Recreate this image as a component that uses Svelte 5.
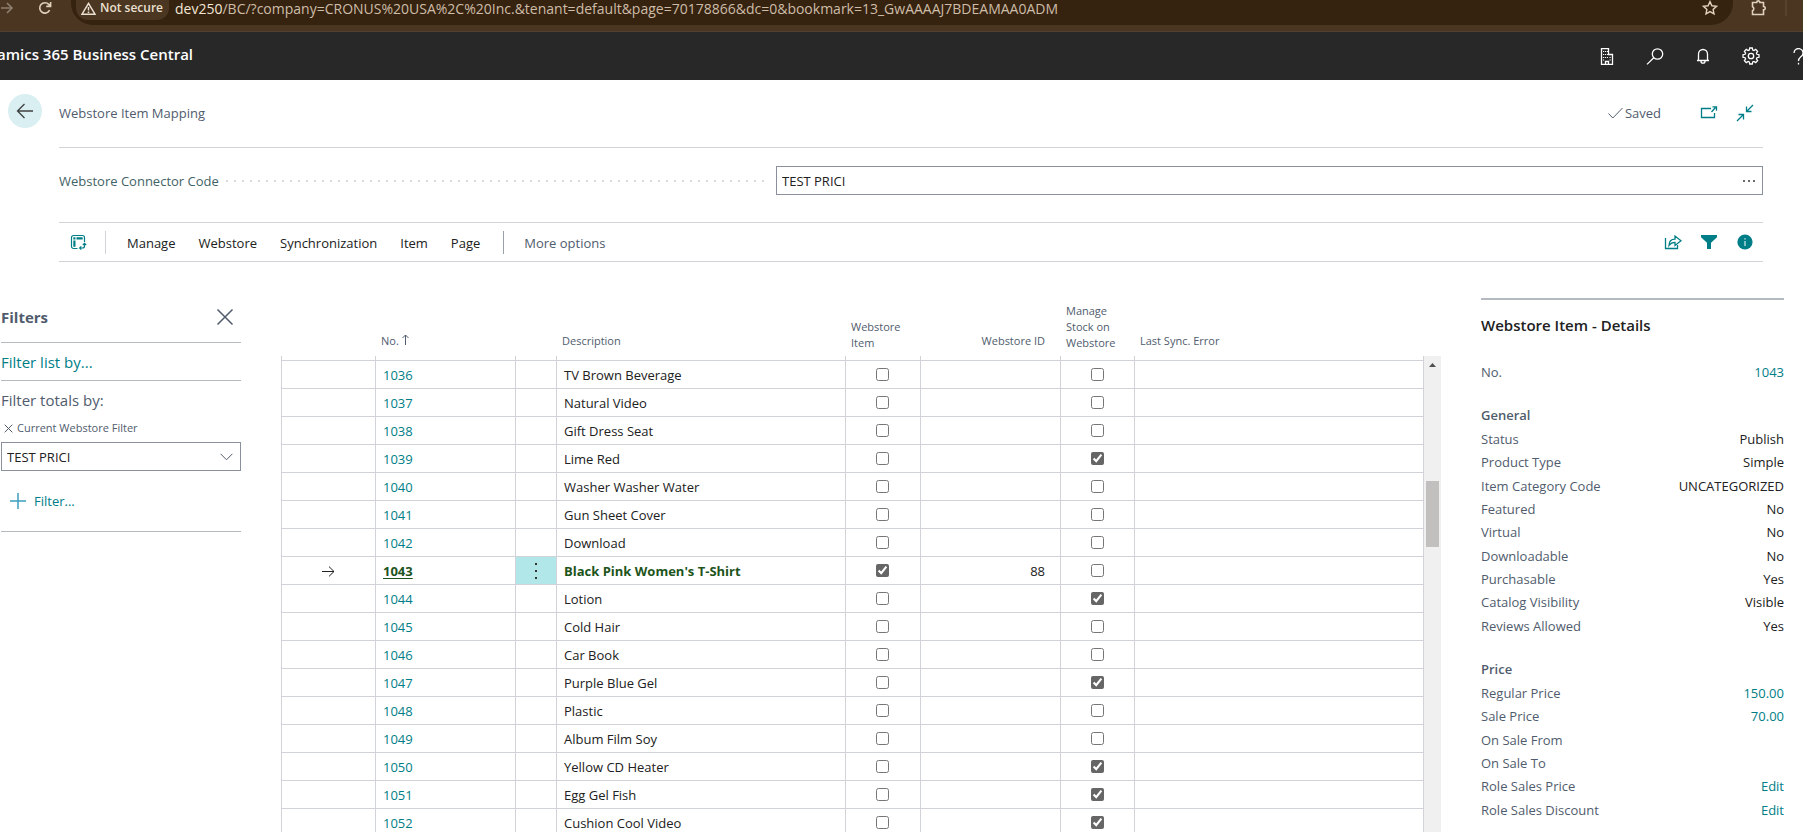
<script>
  const actions = ['Manage', 'Webstore', 'Synchronization', 'Item', 'Page'];

  let rows = $state([
    { no: '1036', description: 'TV Brown Beverage', item: false, id: '', stock: false },
    { no: '1037', description: 'Natural Video', item: false, id: '', stock: false },
    { no: '1038', description: 'Gift Dress Seat', item: false, id: '', stock: false },
    { no: '1039', description: 'Lime Red', item: false, id: '', stock: true },
    { no: '1040', description: 'Washer Washer Water', item: false, id: '', stock: false },
    { no: '1041', description: 'Gun Sheet Cover', item: false, id: '', stock: false },
    { no: '1042', description: 'Download', item: false, id: '', stock: false },
    { no: '1043', description: "Black Pink Women's T-Shirt", item: true, id: '88', stock: false },
    { no: '1044', description: 'Lotion', item: false, id: '', stock: true },
    { no: '1045', description: 'Cold Hair', item: false, id: '', stock: false },
    { no: '1046', description: 'Car Book', item: false, id: '', stock: false },
    { no: '1047', description: 'Purple Blue Gel', item: false, id: '', stock: true },
    { no: '1048', description: 'Plastic', item: false, id: '', stock: false },
    { no: '1049', description: 'Album Film Soy', item: false, id: '', stock: false },
    { no: '1050', description: 'Yellow CD Heater', item: false, id: '', stock: true },
    { no: '1051', description: 'Egg Gel Fish', item: false, id: '', stock: true },
    { no: '1052', description: 'Cushion Cool Video', item: false, id: '', stock: true }
  ]);

  let current = $state('1043');
  let connector = $state('TEST PRICI');
  let filterValue = $state('TEST PRICI');

  const groups = [
    {
      title: 'General',
      fields: [
        ['Status', 'Publish'],
        ['Product Type', 'Simple'],
        ['Item Category Code', 'UNCATEGORIZED'],
        ['Featured', 'No'],
        ['Virtual', 'No'],
        ['Downloadable', 'No'],
        ['Purchasable', 'Yes'],
        ['Catalog Visibility', 'Visible'],
        ['Reviews Allowed', 'Yes']
      ]
    },
    {
      title: 'Price',
      fields: [
        ['Regular Price', '150.00', true],
        ['Sale Price', '70.00', true],
        ['On Sale From', ''],
        ['On Sale To', ''],
        ['Role Sales Price', 'Edit', true],
        ['Role Sales Discount', 'Edit', true]
      ]
    }
  ];
</script>

<div class="app">
  <div class="browser">
    <button class="plain nav-forward" aria-label="Forward">
      <svg width="14" height="14" viewBox="0 0 14 14"><path d="M1 7h11M7 2l5 5-5 5" /></svg>
    </button>
    <button class="plain reload" aria-label="Reload">
      <svg width="14" height="14" viewBox="0 0 14 14"><path d="M11.6 9.2A5.2 5.2 0 1 1 10.8 3.4L12.6 5.2M12.6 1v4.4H8.2" /></svg>
    </button>
    <div class="omnibox">
      <button class="plain secure">
        <svg width="15" height="13" viewBox="0 0 15 13"><path d="M7.5 1.4 14 12.2H1zM7.5 5v3.6M7.5 9.6v1.4" /></svg>
        <span>Not secure</span>
      </button>
      <span class="url"><b>dev250</b>/BC/?company=CRONUS%20USA%2C%20Inc.&amp;tenant=default&amp;page=70178866&amp;dc=0&amp;bookmark=13_GwAAAAJ7BDEAMAA0ADM</span>
      <button class="plain star" aria-label="Bookmark this page">
        <svg width="16" height="16" viewBox="0 0 16 16"><path d="M8 1.6l1.9 4.2 4.6.5-3.4 3.1.9 4.5L8 11.6l-4 2.3.9-4.5L1.500 6.300l4.600-.5z" /></svg>
      </button>
    </div>
    <button class="plain extensions" aria-label="Extensions">
      <svg width="16" height="17" viewBox="0 0 16 17"><path d="M1.500 2.500h4.200a1.600 1.600 0 0 1 3.200 0H12.500v4a1.600 1.600 0 0 1 0 3.400V14.500h-11V10.700a2.200 2.200 0 0 0 0-4z" /></svg>
    </button>
    <span class="browser-sep"></span>
  </div>

  <header class="suite">
    <span class="product">amics 365 Business Central</span>
    <div class="suite-actions">
      <button class="plain" aria-label="Companies">
        <svg width="14" height="17" viewBox="0 0 14 17"><path d="M1.500 16.500v-16h7v6h4v10zM5.500 16v-2.500h3V16" /><path class="dots" d="M3 3.500h1.200M5 3.500h1.200M7 3.500h1M3 6.500h1.200M5 6.500h1.200M7 6.500h1M3 9.500h1.200M5 9.500h1.200M7 9.500h1M9.500 9.500h1.200M3 12h1.200M9.500 12h1.200" /></svg>
      </button>
      <button class="plain" aria-label="Search">
        <svg width="18" height="17" viewBox="0 0 18 17"><circle cx="11.500" cy="6" r="5.200" /><path d="M7.800 9.700 1 16.400" /></svg>
      </button>
      <button class="plain" aria-label="Notifications">
        <svg width="14" height="17" viewBox="0 0 14 17"><path d="M1 12.500h12M2.500 12.500V6a4.500 4.500 0 0 1 9 0v6.500M5 13.200a2 2 0 0 0 4 0" /></svg>
      </button>
      <button class="plain" aria-label="Settings">
        <svg width="18" height="18" viewBox="0 0 18 18"><circle cx="9" cy="9" r="2.700" /><path d="M7.700 1h2.600l.4 2.100 1.200.5L13.700 2.400l1.900 1.900-1.200 1.800.5 1.200 2.100.4v2.600l-2.100.4-.5 1.200 1.200 1.800-1.900 1.900-1.800-1.200-1.200.5-.4 2.100H7.700l-.4-2.100-1.200-.5-1.800 1.200-1.900-1.900 1.200-1.800-.5-1.200L1 10.300V7.700l2.100-.4.500-1.200-1.200-1.800 1.900-1.900 1.800 1.200 1.200-.5z" /></svg>
      </button>
      <button class="plain" aria-label="Help">
        <svg width="12" height="17" viewBox="0 0 12 17"><path d="M1 5a4.500 4.300 0 1 1 7.400 3.200C6.600 9.800 5.500 10.400 5.500 13M5.500 14.800v1.600" /></svg>
      </button>
    </div>
  </header>

  <main>
    <section class="top">
      <div class="title-row">
        <button class="back" aria-label="Back">
          <svg width="18" height="16" viewBox="0 0 18 16"><path d="M17 8H1.500M8.500 1l-7 7 7 7" /></svg>
        </button>
        <h1>Webstore Item Mapping</h1>
        <span class="saved">
          <svg width="15" height="12" viewBox="0 0 15 12"><path d="M.5 6.500 4.800 11 14.500 1" /></svg>
          Saved
        </span>
        <div class="title-icons">
          <button class="plain" aria-label="Open in new window">
            <svg width="18" height="18" viewBox="0 0 18 18"><path d="M11 4.500H1.500v9h13V9M11.500 8l4-4.500M12.500 2.800h4v4" /></svg>
          </button>
          <button class="plain" aria-label="Collapse">
            <svg width="18" height="18" viewBox="0 0 18 18"><path d="M17 1l-6.500 6.500M10.500 2.500v5h5M1 17l6.500-6.500M2.500 10.500h5v5" /></svg>
          </button>
        </div>
      </div>

      <div class="field-row">
        <div class="field-label"><label for="connector">Webstore Connector Code</label><span class="leader"></span></div>
        <div class="lookup">
          <input id="connector" type="text" bind:value={connector} />
          <button class="plain" aria-label="Look up"><span></span><span></span><span></span></button>
        </div>
      </div>

      <nav class="actions">
        <button class="plain analyze" aria-label="Analyze">
          <svg width="17" height="17" viewBox="0 0 17 17"><path d="M7.500 14.500H3.500A2 2 0 0 1 1.500 12.500V3.500A2 2 0 0 1 3.500 1.500h9A2 2 0 0 1 14.500 3.500V8M14.500 9.500v2.500q0 2-2 2H10M12.800 11l1.700-1.700 1.700 1.700M11.300 12.300 9.600 14l1.700 1.700" /><path class="solid" d="M3.300 3.300h2.200v2.200H3.300zM6.500 3.300h6.200v2.200H6.500zM3.300 6.500h2.200v6.200H3.300z" /></svg>
        </button>
        <span class="sep light"></span>
        {#each actions as action}
          <button class="plain action">{action}</button>
        {/each}
        <span class="sep"></span>
        <button class="plain action more">More options</button>
        <div class="list-icons">
          <button class="plain" aria-label="Share">
            <svg width="18" height="18" viewBox="0 0 18 18"><path d="M1.500 5v10.500h12V12M5 12.500c0-4 2.500-6.300 6-6.300V3L17 7.800l-6 4.600V9.300c-2.800 0-4.500.9-6 3.200z" /></svg>
          </button>
          <button class="plain" aria-label="Toggle filter pane">
            <svg width="18" height="18" viewBox="0 0 18 18"><path class="solid" d="M1 2h16v2.200L11 9.800V16H7V9.800L1 4.200z" /></svg>
          </button>
          <button class="plain" aria-label="Toggle details pane">
            <svg width="18" height="18" viewBox="0 0 18 18"><circle class="solid" cx="9" cy="9" r="7.600" /><path class="white" d="M9 5.200v1.400M9 8v5" /></svg>
          </button>
        </div>
      </nav>
    </section>

    <section class="body">
      <aside class="filters">
        <div class="filters-head">
          <h2>Filters</h2>
          <button class="plain" aria-label="Close filters">
            <svg width="18" height="18" viewBox="0 0 18 18"><path d="M1.500 1.500l15 15M16.500 1.500l-15 15" /></svg>
          </button>
        </div>
        <a class="list-by" href="#filter-list">Filter list by...</a>
        <p class="totals">Filter totals by:</p>
        <div class="filter-name">
          <button class="plain" aria-label="Remove filter">
            <svg width="9" height="9" viewBox="0 0 9 9"><path d="M.7.7l7.600 7.600M8.300.7L.7 8.300" /></svg>
          </button>
          <label for="webstore-filter">Current Webstore Filter</label>
        </div>
        <div class="combo">
          <input id="webstore-filter" type="text" bind:value={filterValue} />
          <button class="plain" aria-label="Open list">
            <svg width="13" height="8" viewBox="0 0 13 8"><path d="M.6 .8l5.900 6 5.900-6" /></svg>
          </button>
        </div>
        <button class="plain add-filter">
          <svg width="16" height="16" viewBox="0 0 16 16"><path d="M8 0v16M0 8h16" /></svg>
          Filter...
        </button>
      </aside>

      <div class="list">
        <table>
          <colgroup>
            <col class="c-mark" /><col class="c-no" /><col class="c-menu" /><col class="c-desc" />
            <col class="c-item" /><col class="c-id" /><col class="c-stock" /><col />
          </colgroup>
          <thead>
            <tr>
              <td></td>
              <th scope="col">No. <svg width="7" height="11" viewBox="0 0 7 11"><path d="M3.500 11V1M.5 4l3-3 3 3" /></svg></th>
              <td></td>
              <th scope="col">Description</th>
              <th scope="col" class="wrapped">Webstore<br />Item</th>
              <th scope="col" class="num">Webstore ID</th>
              <th scope="col" class="wrapped">Manage<br />Stock on<br />Webstore</th>
              <th scope="col">Last Sync. Error</th>
            </tr>
          </thead>
          <tbody>
            <tr class="partial" aria-hidden="true">
              <td></td><td></td><td></td><td></td><td></td><td></td><td></td><td></td>
            </tr>
            {#each rows as row}
              <tr class:current={row.no === current} onclick={() => (current = row.no)}>
                <td class="mark">
                  {#if row.no === current}
                    <svg width="13" height="11" viewBox="0 0 13 11"><path d="M0 5.500h12M7 .6l5 4.900-5 4.900" /></svg>
                  {/if}
                </td>
                <td><a href={'#' + row.no}>{row.no}</a></td>
                <td class="menu">
                  {#if row.no === current}
                    <button class="plain" aria-label="Show more options"><span></span><span></span><span></span></button>
                  {/if}
                </td>
                <td class="desc">{row.description}</td>
                <td class="check"><input type="checkbox" aria-label={'Webstore Item ' + row.no} bind:checked={row.item} /></td>
                <td class="num">{row.id}</td>
                <td class="check"><input type="checkbox" aria-label={'Manage Stock on Webstore ' + row.no} bind:checked={row.stock} /></td>
                <td></td>
              </tr>
            {/each}
          </tbody>
        </table>
        <div class="scrollbar">
          <svg width="7" height="4" viewBox="0 0 7 4"><path d="M3.500 0L7 4H0z" /></svg>
          <div class="thumb"></div>
        </div>
      </div>

      <aside class="details">
        <h2>Webstore Item - Details</h2>
        <dl class="key">
          <div><dt>No.</dt><dd><a href="#1043">1043</a></dd></div>
        </dl>
        {#each groups as group}
          <section class="group">
            <h3>{group.title}</h3>
            <dl>
              {#each group.fields as [label, value, link]}
                <div>
                  <dt>{label}</dt>
                  <dd>{#if link}<a href="#details">{value}</a>{:else}{value}{/if}</dd>
                </div>
              {/each}
            </dl>
          </section>
        {/each}
      </aside>
    </section>
  </main>
</div>

<style>
  :global(body) {
    margin: 0;
    overflow: hidden;
  }

  .app {
    --teal: #007e87;
    --slate: #505c6d;
    --ink: #212121;
    --rule: #d0d3d8;
    display: flex;
    flex-direction: column;
    height: 100vh;
    overflow: hidden;
    background: #fff;
    color: var(--ink);
    font-family: 'Open Sans', 'Noto Sans', sans-serif;
    font-size: 13px;
    line-height: 20px;
  }

  h1, h2, h3, p, dl, dd { margin: 0; }

  a { color: var(--teal); text-decoration: none; }

  svg {
    display: block;
    flex: none;
    fill: none;
    stroke: currentColor;
  }

  .solid { fill: currentColor; stroke: none; }

  .plain {
    display: flex;
    align-items: center;
    padding: 0;
    border: 0;
    background: none;
    color: inherit;
    font: inherit;
    cursor: pointer;
  }

  input { font: inherit; color: inherit; }

  /* Browser toolbar */
  .browser {
    display: flex;
    flex: none;
    align-items: flex-start;
    height: 31px;
    border-bottom: 1px solid #524030;
    background: #4a3621;
    color: #e0d0bc;
  }
  .browser svg { stroke-width: 1.6; }
  .nav-forward { height: 16px; color: #8e7f6e; }
  .reload { height: 16px; margin-left: 24px; }
  .omnibox {
    display: flex;
    flex: 1;
    align-items: flex-start;
    height: 25px;
    margin-left: 19px;
    padding: 0 15px 0 5px;
    border-radius: 0 0 22px 22px;
    background: #35220f;
  }
  .secure {
    gap: 4px;
    height: 20px;
    padding: 0 6px 4px 5px;
    border-radius: 0 0 12px 12px;
    background: #4a3621;
    color: #ece0d2;
    font-size: 12px;
    font-weight: 600;
  }
  .secure svg { stroke-width: 1.5; }
  .url {
    flex: 1;
    margin-left: 6px;
    color: #cdbda8;
    font-size: 14px;
    line-height: 17px;
    white-space: nowrap;
  }
  .url b { color: #f3e6d6; font-weight: 400; }
  .star { height: 16px; }
  .star svg { stroke-width: 1.4; }
  .extensions { height: 16px; margin-left: 18px; }
  .browser-sep {
    width: 2px;
    height: 16px;
    margin: 0 16px 0 18px;
    background: #57442f;
  }

  /* Suite bar */
  .suite {
    display: flex;
    flex: none;
    align-items: center;
    justify-content: space-between;
    height: 48px;
    background: #282828;
    color: #fff;
  }
  .product {
    margin-left: -3px;
    padding-bottom: 4px;
    font-size: 15px;
    font-weight: 600;
  }
  .suite-actions { display: flex; margin-right: -20px; }
  .suite-actions .plain { justify-content: center; width: 48px; height: 48px; }
  .suite-actions svg { stroke-width: 1.3; }
  .suite-actions .dots { stroke-width: 1; }

  main {
    display: flex;
    flex: 1;
    flex-direction: column;
    min-height: 0;
  }

  /* Page heading, connector field and action bar */
  .top { padding: 0 40px 0 59px; }
  .title-row {
    display: flex;
    align-items: center;
    box-sizing: border-box;
    height: 68px;
    padding-bottom: 1px;
    border-bottom: 1px solid var(--rule);
    color: var(--slate);
  }
  .back {
    display: flex;
    align-items: center;
    justify-content: center;
    width: 34px;
    height: 34px;
    margin: 0 17px 4px -51px;
    padding: 0;
    border: 0;
    border-radius: 50%;
    background: #d9eff2;
    color: #404040;
  }
  .back svg { stroke-width: 1.3; }
  h1 { flex: 1; font-size: 13px; font-weight: 400; }
  .saved { display: flex; align-items: center; gap: 2px; }
  .title-icons, .list-icons {
    display: flex;
    gap: 18px;
    margin-right: 9px;
    color: var(--teal);
  }
  .title-icons { margin-left: 39px; }
  .title-icons svg, .list-icons svg { stroke-width: 1.3; }

  .field-row {
    display: grid;
    grid-template-columns: minmax(0, 5fr) minmax(0, 7fr);
    gap: 12px;
    align-items: center;
    box-sizing: border-box;
    height: 74px;
    padding-bottom: 9px;
  }
  .field-label {
    display: flex;
    align-items: center;
    gap: 4px;
    padding-top: 1px;
    color: #3f6366;
  }
  .leader {
    flex: 1;
    height: 2px;
    background: repeating-linear-gradient(to left, #d8dadd 0 2px, transparent 2px 8px);
  }
  .lookup, .combo {
    display: flex;
    box-sizing: border-box;
    height: 29px;
    border: 1px solid #8a919c;
  }
  .lookup input, .combo input {
    flex: 1;
    min-width: 0;
    padding: 1px 5px 0;
    border: 0;
    outline: 0;
    background: none;
  }
  .lookup .plain { gap: 3px; padding: 0 7px; }
  .lookup .plain span, .menu span {
    width: 2px;
    height: 2px;
    background: #333;
  }
  .lookup .plain span { background: #6b6b6b; }

  .actions {
    display: flex;
    align-items: center;
    height: 38px;
    border-top: 1px solid var(--rule);
    border-bottom: 1px solid var(--rule);
  }
  .analyze { margin: 0 18px 0 11px; color: var(--teal); }
  .analyze svg { stroke-width: 1.2; }
  .sep { width: 1px; height: 23px; background: #9aa0a8; }
  .sep.light { margin-right: 21px; background: var(--rule); }
  .action { margin-right: 23px; padding-top: 2px; }
  .more { margin-left: 20px; color: var(--slate); }
  .list-icons { margin-left: auto; }
  .white { stroke: #fff; stroke-width: 1; }

  /* Filter pane, list and details side by side */
  .body {
    display: flex;
    flex: 1;
    gap: 40px;
    min-height: 0;
    padding-right: 19px;
  }

  .filters {
    flex: none;
    width: 240px;
    margin-left: 1px;
    color: var(--slate);
  }
  .filters-head {
    display: flex;
    align-items: center;
    justify-content: space-between;
    height: 50px;
    padding: 30px 7px 0 0;
    border-bottom: 1px solid #b5bac1;
  }
  .filters-head h2 { font-size: 15px; font-weight: 700; }
  .filters-head svg { stroke-width: 1.5; }
  .list-by, .totals { padding-top: 1px; font-size: 15px; line-height: 36px; }
  .list-by {
    display: block;
    border-bottom: 1px solid #b5bac1;
  }
  .filter-name {
    display: flex;
    align-items: center;
    gap: 4px;
    height: 20px;
    padding: 0 0 4px 3px;
    font-size: 11px;
  }
  .combo { color: var(--ink); }
  .combo .plain { padding: 0 7px; color: var(--slate); }
  .add-filter {
    gap: 8px;
    width: 100%;
    padding: 20px 0 20px 9px;
    border-bottom: 1px solid #b5bac1;
    color: var(--teal);
  }
  .add-filter svg { color: #3d9fbd; stroke-width: 1.5; }

  .list {
    display: flex;
    flex: 1;
    min-width: 0;
    overflow: hidden;
  }
  table {
    flex: 1;
    align-self: flex-start;
    min-width: 0;
    border-spacing: 0;
    table-layout: fixed;
  }
  .c-mark { width: 94px; }
  .c-no { width: 140px; }
  .c-menu { width: 41px; }
  .c-desc { width: 289px; }
  .c-item { width: 75px; }
  .c-id { width: 140px; }
  .c-stock { width: 74px; }
  thead tr { height: 94px; }
  th {
    padding: 0 0 7px 6px;
    color: var(--slate);
    font-size: 11px;
    font-weight: 400;
    line-height: 16px;
    text-align: left;
    vertical-align: bottom;
  }
  th.wrapped { padding-bottom: 5px; }
  th svg { display: inline; }
  th.num, td.num { padding-right: 15px; text-align: right; }
  tbody td {
    box-sizing: border-box;
    height: 28px;
    padding: 1px 7px 0;
    border-left: 1px solid var(--rule);
    border-bottom: 1px solid var(--rule);
    white-space: nowrap;
  }
  tbody td:last-child { border-right: 1px solid var(--rule); }
  .partial td { height: 5px; }
  .mark svg { margin: 0 auto; }
  td.check { padding: 0 1px 0 0; }
  .check input {
    display: block;
    width: 13px;
    height: 13px;
    margin: 0 auto;
    accent-color: #666;
  }
  .current a, .current .desc { color: #1d541b; font-weight: 700; }
  .current a { text-decoration: underline; text-underline-offset: 2px; }
  td.menu { padding: 1px 0 0; }
  .current .menu { background: #b2e7ea; }
  .menu .plain {
    flex-direction: column;
    gap: 5px;
    width: 100%;
  }

  .scrollbar {
    display: flex;
    flex: none;
    flex-direction: column;
    align-items: center;
    box-sizing: border-box;
    width: 17px;
    margin-top: 94px;
    padding-top: 7px;
    background: #f0f0f0;
  }
  .scrollbar path { fill: #505050; stroke: none; }
  .thumb { width: 13px; height: 66px; margin-top: 114px; background: #c1c0be; }

  .details { flex: none; width: 303px; padding-top: 36px; color: var(--slate); }
  .details h2 {
    padding: 15px 0 17px;
    border-top: 2px solid #b5bac1;
    color: var(--ink);
    font-size: 15px;
    font-weight: 600;
  }
  .details div { display: flex; justify-content: space-between; align-items: center; }
  .details dd { color: var(--ink); text-align: right; }
  .details .key { padding: 10px 0 1px; }
  .group { padding-top: 21px; }
  .group h3 { font-size: 13px; font-weight: 600; line-height: 23px; }
  .group dl { display: grid; grid-auto-rows: 23px 24px 23px; }
</style>
